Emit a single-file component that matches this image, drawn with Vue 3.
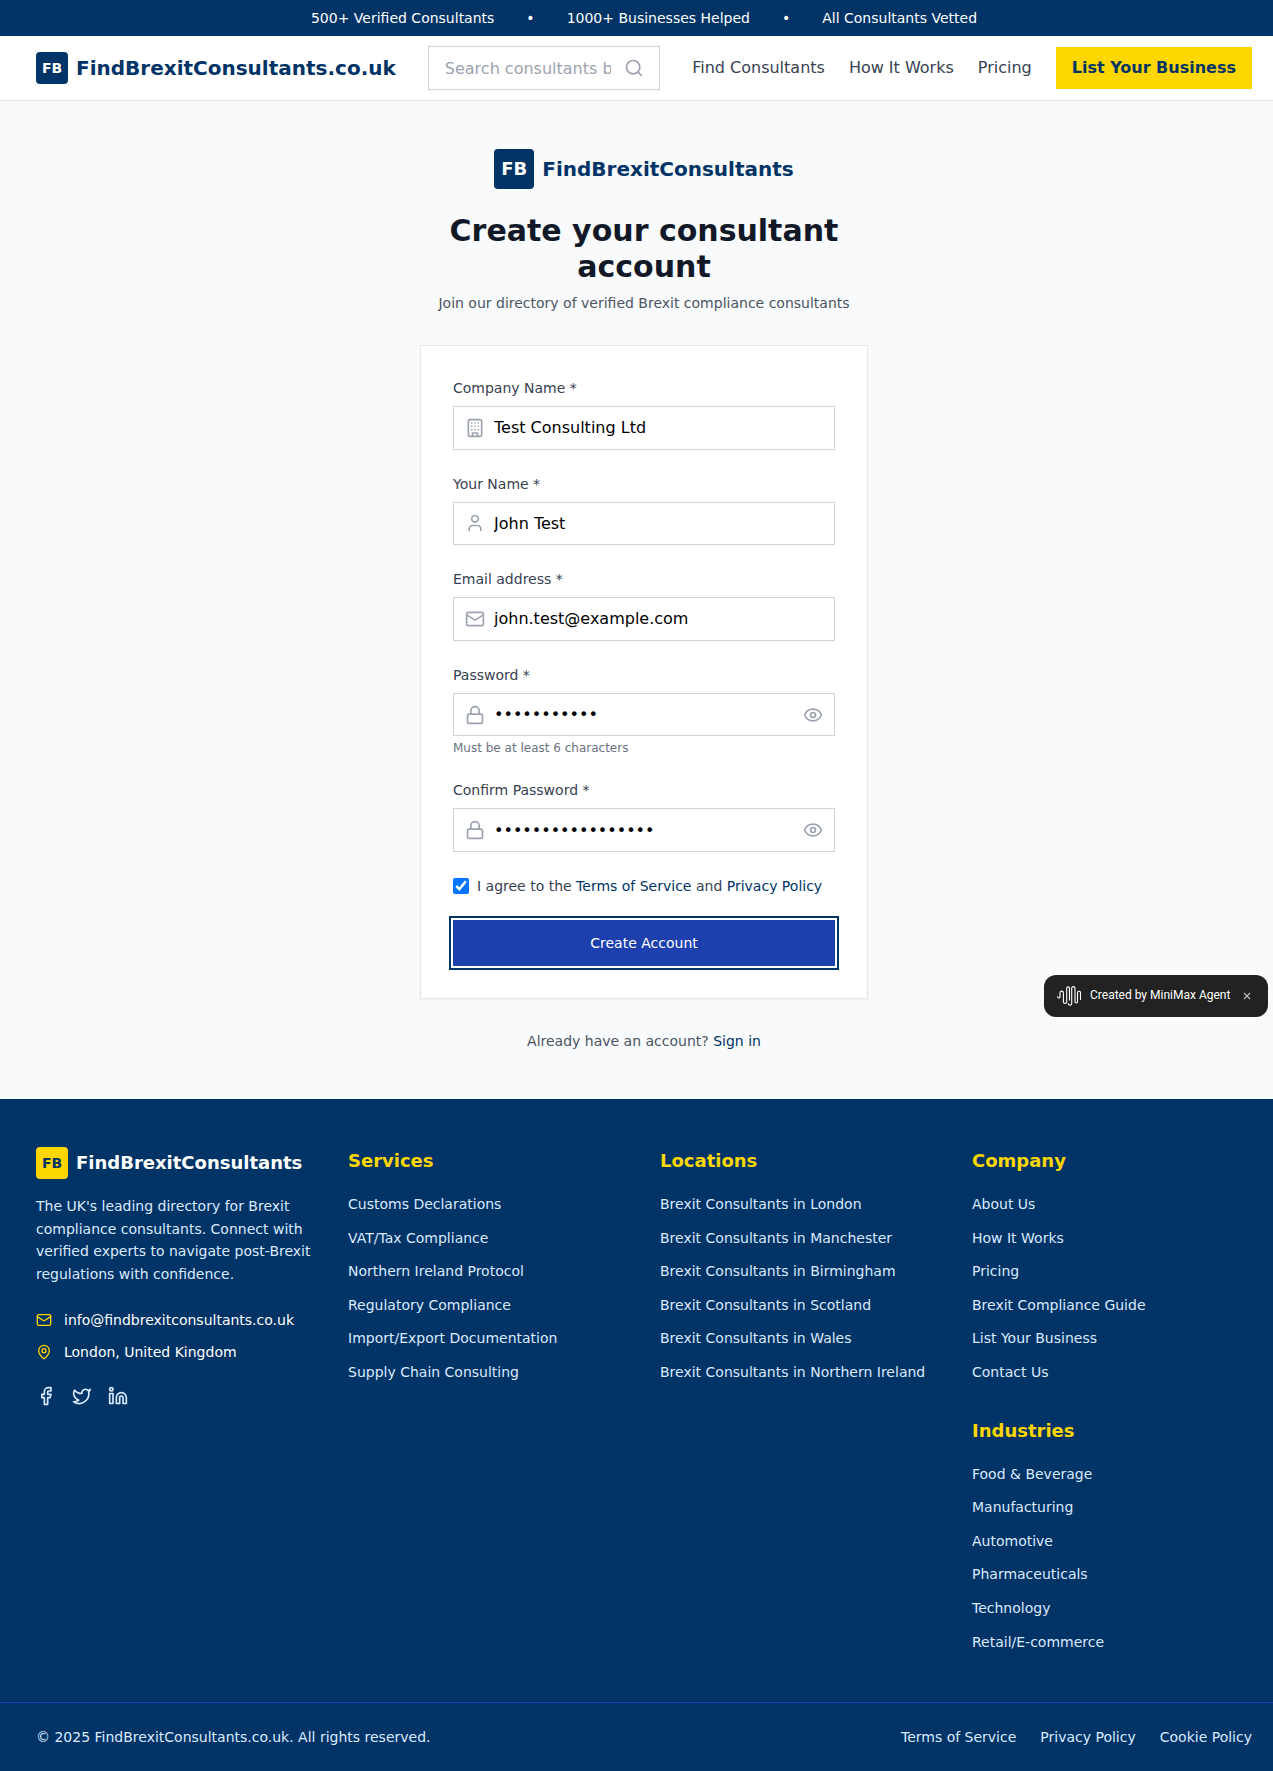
<script setup>
import { ref } from 'vue'

const search = ref('')
const agreed = ref(true)
const stats = ['500+ Verified Consultants', '1000+ Businesses Helped', 'All Consultants Vetted']
const nav = ['Find Consultants', 'How It Works', 'Pricing']

const icons = {
  building: '<rect width="16" height="20" x="4" y="2" rx="2" ry="2"/><path d="M9 22v-4h6v4"/><path d="M8 6h.01"/><path d="M16 6h.01"/><path d="M12 6h.01"/><path d="M12 10h.01"/><path d="M12 14h.01"/><path d="M16 10h.01"/><path d="M16 14h.01"/><path d="M8 10h.01"/><path d="M8 14h.01"/>',
  user: '<path d="M19 21v-2a4 4 0 0 0-4-4H9a4 4 0 0 0-4 4v2"/><circle cx="12" cy="7" r="4"/>',
  mail: '<rect width="20" height="16" x="2" y="4" rx="2"/><path d="m22 7-8.97 5.7a1.94 1.94 0 0 1-2.06 0L2 7"/>',
  lock: '<rect width="18" height="11" x="3" y="11" rx="2" ry="2"/><path d="M7 11V7a5 5 0 0 1 10 0v4"/>',
  eye: '<path d="M2.062 12.348a1 1 0 0 1 0-.696 10.75 10.75 0 0 1 19.876 0 1 1 0 0 1 0 .696 10.75 10.75 0 0 1-19.876 0"/><circle cx="12" cy="12" r="3"/>',
  search: '<circle cx="11" cy="11" r="8"/><path d="m21 21-4.3-4.3"/>',
  pin: '<path d="M20 10c0 4.993-5.539 10.193-7.399 11.799a1 1 0 0 1-1.202 0C9.539 20.193 4 14.993 4 10a8 8 0 0 1 16 0"/><circle cx="12" cy="10" r="3"/>',
  facebook: '<path d="M18 2h-3a5 5 0 0 0-5 5v3H7v4h3v8h4v-8h3l1-4h-4V7a1 1 0 0 1 1-1h3z"/>',
  twitter: '<path d="M22 4s-.7 2.1-2 3.4c1.6 10-9.4 17.3-18 11.6 2.2.1 4.4-.6 6-2C3 15.500 .5 9.600 3 5c2.200 2.600 5.600 4.100 9 4-.9-4.200 4-6.600 7-3.800 1.100 0 3-1.200 3-1.200z"/>',
  linkedin: '<path d="M16 8a6 6 0 0 1 6 6v7h-4v-7a2 2 0 0 0-2-2 2 2 0 0 0-2 2v7h-4v-7a6 6 0 0 1 6-6z"/><rect width="4" height="12" x="2" y="9"/><circle cx="4" cy="4" r="2"/>',
}

const fields = ref([
  { id: 'company', label: 'Company Name *', type: 'text', icon: 'building', value: 'Test Consulting Ltd' },
  { id: 'name', label: 'Your Name *', type: 'text', icon: 'user', value: 'John Test' },
  { id: 'email', label: 'Email address *', type: 'email', icon: 'mail', value: 'john.test@example.com' },
  { id: 'password', label: 'Password *', type: 'password', icon: 'lock', value: 'example-pwd', hint: 'Must be at least 6 characters' },
  { id: 'confirm', label: 'Confirm Password *', type: 'password', icon: 'lock', value: 'example-pwd-again' },
])

const columns = [
  [{ title: 'Services', links: ['Customs Declarations', 'VAT/Tax Compliance', 'Northern Ireland Protocol', 'Regulatory Compliance', 'Import/Export Documentation', 'Supply Chain Consulting'] }],
  [{ title: 'Locations', links: ['London', 'Manchester', 'Birmingham', 'Scotland', 'Wales', 'Northern Ireland'].map((p) => `Brexit Consultants in ${p}`) }],
  [
    { title: 'Company', links: ['About Us', 'How It Works', 'Pricing', 'Brexit Compliance Guide', 'List Your Business', 'Contact Us'] },
    { title: 'Industries', links: ['Food & Beverage', 'Manufacturing', 'Automotive', 'Pharmaceuticals', 'Technology', 'Retail/E-commerce'] },
  ],
]
const legal = ['Terms of Service', 'Privacy Policy', 'Cookie Policy']
</script>

<template>
  <div class="viewport">
    <div class="page">
      <div class="topbar">
        <template v-for="(s, i) in stats" :key="s">
          <span v-if="i">•</span>
          <span>{{ s }}</span>
        </template>
      </div>

      <header class="header">
        <div class="container header-row">
          <a class="brand">
            <span class="mark">FB</span>
            <span class="brand-name">FindBrexitConsultants.co.uk</span>
          </a>
          <div class="search">
            <input v-model="search" type="text" placeholder="Search consultants by service, location..." />
            <svg class="icon" viewBox="0 0 24 24" v-html="icons.search" />
          </div>
          <nav class="nav">
            <a v-for="n in nav" :key="n">{{ n }}</a>
            <a class="cta">List Your Business</a>
          </nav>
        </div>
      </header>

      <main class="main">
        <div class="signup">
          <a class="brand brand-center">
            <span class="mark mark-lg">FB</span>
            <span class="brand-name">FindBrexitConsultants</span>
          </a>
          <h1>Create your consultant account</h1>
          <p class="subtitle">Join our directory of verified Brexit compliance consultants</p>

          <form class="card" @submit.prevent>
            <div v-for="f in fields" :key="f.id" class="field">
              <label :for="f.id">{{ f.label }}</label>
              <div class="control">
                <svg class="icon lead" viewBox="0 0 24 24" v-html="icons[f.icon]" />
                <input :id="f.id" v-model="f.value" :type="f.type" autocomplete="off" />
                <svg v-if="f.type === 'password'" class="icon trail" viewBox="0 0 24 24" v-html="icons.eye" />
              </div>
              <p v-if="f.hint" class="hint">{{ f.hint }}</p>
            </div>
            <div class="terms">
              <input id="terms" v-model="agreed" type="checkbox" />
              <label for="terms">I agree to the <a>Terms of Service</a> and <a>Privacy Policy</a></label>
            </div>
            <button class="submit" type="submit">Create Account</button>
          </form>
          <p class="signin">Already have an account? <a>Sign in</a></p>
        </div>
      </main>

      <footer class="footer">
        <div class="container footer-grid">
          <div>
            <div class="brand footer-brand">
              <span class="mark mark-gold">FB</span>
              <span class="brand-name">FindBrexitConsultants</span>
            </div>
            <p class="about">The UK's leading directory for Brexit compliance consultants. Connect with verified experts to navigate post-Brexit regulations with confidence.</p>
            <div class="contacts">
              <div><svg class="icon" viewBox="0 0 24 24" v-html="icons.mail" /><span>info@findbrexitconsultants.co.uk</span></div>
              <div><svg class="icon" viewBox="0 0 24 24" v-html="icons.pin" /><span>London, United Kingdom</span></div>
            </div>
            <div class="social">
              <svg v-for="s in ['facebook', 'twitter', 'linkedin']" :key="s" class="icon" viewBox="0 0 24 24" v-html="icons[s]" />
            </div>
          </div>
          <div v-for="(col, i) in columns" :key="i" class="footer-col">
            <section v-for="g in col" :key="g.title">
              <h3>{{ g.title }}</h3>
              <ul>
                <li v-for="l in g.links" :key="l"><a>{{ l }}</a></li>
              </ul>
            </section>
          </div>
        </div>
        <div class="footer-bottom">
          <div class="container bottom-row">
            <span>© 2025 FindBrexitConsultants.co.uk. All rights reserved.</span>
            <div class="legal"><a v-for="l in legal" :key="l">{{ l }}</a></div>
          </div>
        </div>
      </footer>

      <div class="agent-badge">
        <svg class="wave" viewBox="0 0 24 22">
          <path d="M.6 11.800a1.200 1.200 0 0 0 2.400 0V7.800a1.700 1.700 0 0 1 3.400 0v9a1.650 1.650 0 0 0 3.300 0V3.300a1.400 1.400 0 0 1 2.800 0V15M11.300 18.500a1.700 1.700 0 0 0 3.400 0V3.300a1.650 1.650 0 0 1 3.300 0v13.500a1.250 1.250 0 0 0 2.500 0V7.800a1.500 1.500 0 0 1 3 0V14.500" />
        </svg>
        <span class="badge-text">Created by MiniMax Agent</span>
        <svg class="close" viewBox="0 0 8 8"><path d="M1 1l6 6M7 1L1 7" /></svg>
      </div>
    </div>
  </div>
</template>

<style>
body {
  margin: 0;
  background: #f9fafb;
}
</style>

<style scoped>
* {
  box-sizing: border-box;
}
h1, h3, p, ul {
  margin: 0;
  padding: 0;
}
ul {
  list-style: none;
}
.viewport {
  overflow: hidden;
}
.page {
  position: relative;
  width: 1288px;
  height: 1771px;
  background: #f9fafb;
  font-family: "DejaVu Sans", sans-serif;
  font-size: 16px;
  line-height: 1.6;
}
.container {
  width: 1216px;
  margin: 0 auto;
}
.icon {
  display: block;
  flex: none;
  width: 20px;
  height: 20px;
  fill: none;
  stroke: currentColor;
  stroke-width: 2;
  stroke-linecap: round;
  stroke-linejoin: round;
}
.topbar {
  display: flex;
  justify-content: center;
  gap: 32px;
  padding: 8px 0;
  background: #003366;
  color: #fff;
  font-size: 14px;
  line-height: 20px;
}
.header {
  height: 65px;
  background: #fff;
  border-bottom: 1px solid #e5e7eb;
}
.header-row {
  display: flex;
  align-items: center;
  height: 64px;
}
.brand {
  display: flex;
  align-items: center;
  gap: 8px;
  color: #003366;
  font-weight: 700;
  font-size: 20px;
  line-height: 28px;
  white-space: nowrap;
}
.mark {
  display: flex;
  flex: none;
  align-items: center;
  justify-content: center;
  width: 32px;
  height: 32px;
  border-radius: 4px;
  background: #003366;
  color: #fff;
  font-size: 14px;
  line-height: 20px;
}
.mark-lg {
  width: 40px;
  height: 40px;
  font-size: 18px;
}
.mark-gold {
  background: #ffd700;
  color: #003366;
}
.search {
  position: relative;
  flex: 1;
  min-width: 0;
  margin: 0 32px;
}
.search input,
.control input {
  display: block;
  width: 100%;
  height: 43.6px;
  margin: 0;
  padding: 0 48px 0 16px;
  border: 1px solid #d1d5db;
  border-radius: 0;
  background: #fff;
  color: #000;
  font: 16px "DejaVu Sans", sans-serif;
  outline: none;
}
.search input::placeholder {
  color: #9ca3af;
}
.search .icon {
  position: absolute;
  right: 16px;
  top: 12px;
  color: #9ca3af;
}
.nav {
  display: flex;
  align-items: center;
  gap: 24px;
  color: #374151;
  white-space: nowrap;
}
.cta {
  padding: 8px 16px;
  background: #ffd700;
  color: #003366;
  font-weight: 700;
}
.main {
  padding: 48px 0;
}
.signup {
  width: 448px;
  margin: 0 auto;
}
.brand-center {
  justify-content: center;
}
h1 {
  margin-top: 24px;
  color: #111827;
  font-size: 30px;
  font-weight: 700;
  line-height: 36px;
  text-align: center;
}
.subtitle,
.signin {
  color: #4b5563;
  font-size: 14px;
  line-height: 20px;
  text-align: center;
}
.subtitle {
  margin-top: 8px;
}
.signin {
  margin-top: 32px;
}
.signin a,
.terms a {
  color: #003366;
}
.card {
  margin-top: 32px;
  padding: 32px;
  border: 1px solid #e5e7eb;
  background: #fff;
  box-shadow: 0 1px 2px rgba(0, 0, 0, 0.05);
}
.field {
  margin-bottom: 24px;
}
.field label {
  display: block;
  margin-bottom: 8px;
  color: #374151;
  font-size: 14px;
  line-height: 20px;
}
.control {
  position: relative;
}
.control input {
  padding: 0 40px;
}
.control .icon {
  position: absolute;
  top: 11.8px;
  color: #9ca3af;
}
.lead {
  left: 12px;
}
.trail {
  right: 12px;
}
.hint {
  margin-top: 4px;
  color: #6b7280;
  font-size: 12px;
  line-height: 16px;
}
.terms {
  display: flex;
  align-items: center;
  gap: 8px;
  margin-bottom: 24px;
  color: #374151;
  font-size: 14px;
  line-height: 20px;
}
.terms input {
  width: 16px;
  height: 16px;
  margin: 0;
}
.submit {
  display: block;
  width: 100%;
  height: 46px;
  border: 0;
  background: #1e40af;
  color: #fff;
  font: 14px/20px "DejaVu Sans", sans-serif;
  box-shadow: 0 0 0 2px #fff, 0 0 0 4px #003366;
}
.footer {
  background: #003366;
  color: #dbeafe;
}
.footer-grid {
  display: grid;
  grid-template-columns: repeat(4, 264px);
  justify-content: start;
  column-gap: 48px;
  width: 1216px;
  padding: 48px 0;
}
.footer-brand {
  color: #fff;
  font-size: 18px;
}
.about {
  margin-top: 16px;
  width: 280px;
  font-size: 14px;
  line-height: 22.75px;
}
.contacts {
  display: flex;
  flex-direction: column;
  gap: 12px;
  margin-top: 24px;
  color: #fff;
  font-size: 14px;
  line-height: 20px;
}
.contacts div {
  display: flex;
  align-items: center;
  gap: 12px;
}
.contacts .icon {
  width: 16px;
  height: 16px;
  color: #ffd700;
}
.social {
  display: flex;
  gap: 16px;
  margin-top: 24px;
}
.footer-col {
  display: flex;
  flex-direction: column;
  gap: 32px;
  white-space: nowrap;
}
h3 {
  margin-bottom: 16px;
  color: #ffd700;
  font-size: 18px;
  font-weight: 700;
  line-height: 28px;
}
.footer-col ul {
  display: flex;
  flex-direction: column;
  gap: 8px;
}
.footer-col a {
  font-size: 14px;
}
.footer-bottom {
  padding: 24px 0;
  border-top: 1px solid #1e40af;
  font-size: 14px;
  line-height: 20px;
}
.bottom-row {
  display: flex;
  justify-content: space-between;
}
.legal {
  display: flex;
  gap: 24px;
}
.agent-badge {
  position: absolute;
  left: 1044px;
  top: 975px;
  display: flex;
  align-items: center;
  width: 224px;
  height: 42px;
  padding-left: 13px;
  border-radius: 12px;
  background: #222;
  color: #fff;
  font: 12px/20px Roboto, sans-serif;
  white-space: nowrap;
}
.wave {
  width: 24px;
  height: 22px;
  margin-right: 9px;
  fill: none;
  stroke: #fff;
  stroke-width: 1.1;
  stroke-linecap: round;
}
.badge-text {
  margin-bottom: 2px;
}
.close {
  width: 8px;
  height: 8px;
  margin-left: 13px;
  fill: none;
  stroke: #bbb;
  stroke-width: 1.2;
}
</style>
